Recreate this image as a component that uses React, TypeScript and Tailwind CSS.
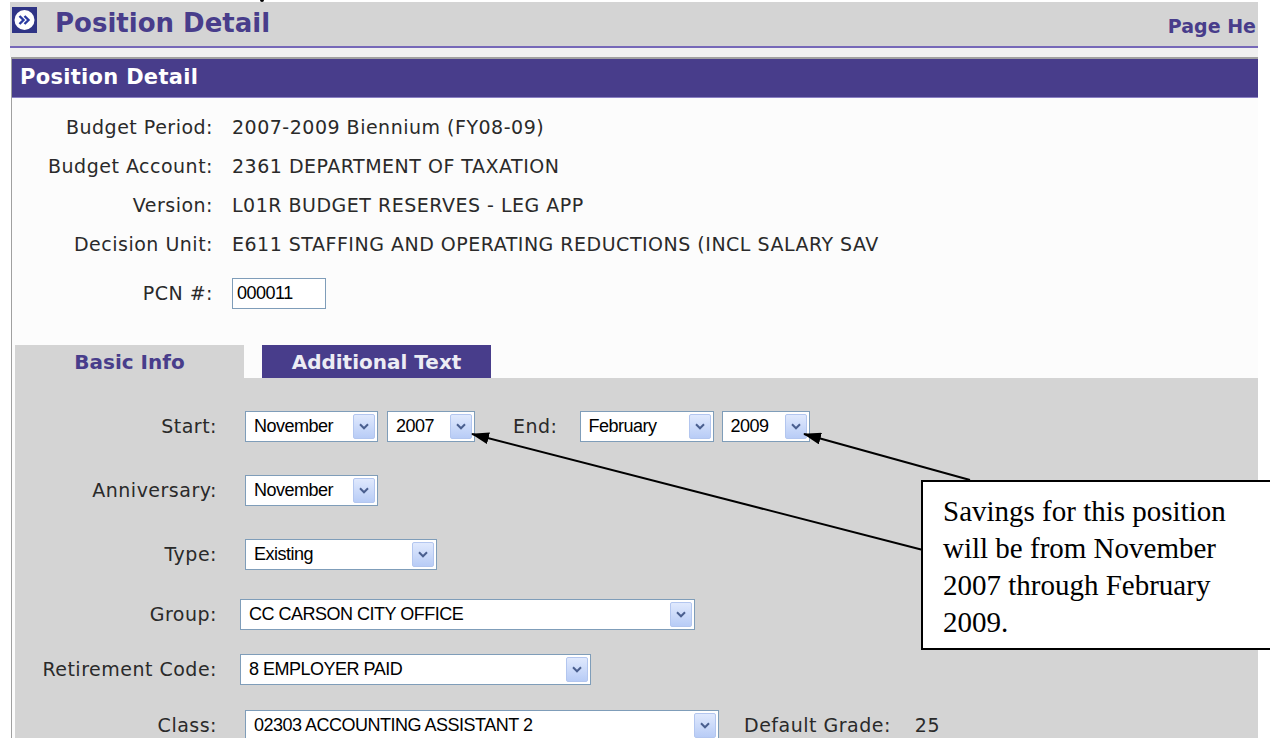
import React from "react";

function PageIcon() {
  return (
    <svg width="25" height="26" viewBox="0 0 25 26" className="shrink-0">
      <rect x="0" y="0" width="25" height="26" fill="#2f3485" />
      <circle cx="12.5" cy="13" r="10" fill="#ffffff" />
      <path d="M7.5 9 L11.5 13 L7.5 17" fill="none" stroke="#2a3aa0" strokeWidth="2.4" />
      <path d="M12.5 9 L16.5 13 L12.5 17" fill="none" stroke="#2a3aa0" strokeWidth="2.4" />
    </svg>
  );
}

function Chevron() {
  return (
    <svg width="10" height="7" viewBox="0 0 10 7">
      <path d="M1 1.3 L5 5.3 L9 1.3" fill="none" stroke="#4a5f8f" strokeWidth="2" />
    </svg>
  );
}

function Select({ value, className }: { value: string; className: string }) {
  return (
    <div
      className={`${className} h-[31px] shrink-0 flex items-center bg-white border border-[#7f9db9] pl-[8px] pr-[2px] font-['Liberation_Sans',Arial,sans-serif] text-[18px] tracking-[-0.5px] text-black`}
    >
      <span className="flex-1 whitespace-nowrap overflow-hidden">{value}</span>
      <span className="w-[22px] h-[25px] rounded-[2px] border border-[#b3c6ef] bg-linear-to-b from-[#e0e9fd] to-[#b8ccf6] flex items-center justify-center">
        <Chevron />
      </span>
    </div>
  );
}

function InfoRow({ label, value }: { label: string; value: string }) {
  return (
    <div className="h-[39px] flex items-center">
      <div className="w-[201px] text-right whitespace-nowrap">{label}</div>
      <div className="ml-[19px] whitespace-nowrap">{value}</div>
    </div>
  );
}

function FormLabel({ children }: { children: React.ReactNode }) {
  return <div className="w-[202px] shrink-0 text-right whitespace-nowrap">{children}</div>;
}

export default function App() {
  return (
    <div className="relative w-[1270px] h-[738px] overflow-hidden bg-white text-[#2a2a2a] font-['DejaVu_Sans',Verdana,sans-serif] text-[19px]">
      {/* descender of a line of text above the page */}
      <div className="absolute left-[260px] top-0 w-[4px] h-[2px] bg-black rounded-b-full" />

      <div className="pt-[2px] pl-[10px] pr-[12px]">
        {/* page title band */}
        <header className="h-[44px] bg-[#d4d4d4] flex items-start overflow-hidden">
          <div className="ml-[2px] mt-[5px]">
            <PageIcon />
          </div>
          <h1 className="ml-[18px] mt-[4px] text-[26px] leading-[34px] font-bold text-[#483d8b] whitespace-nowrap">
            Position Detail
          </h1>
          <div className="flex-1" />
          <div className="mr-[2px] mt-[11px] whitespace-nowrap text-[19px] leading-[26px] font-bold text-[#483d8b]">
            Page He
          </div>
        </header>
        <div className="h-[2px] bg-[#7668b8]" />
        <div className="h-[9px] bg-[#f0f0f0]" />

        <div className="ml-[1px] border-l border-t-2 border-[#a0a0a0]">
          <div className="h-[38px] bg-[#483d8b] flex items-center pl-[8px] text-white font-bold text-[21px] tracking-[0.3px] whitespace-nowrap">
            Position Detail
          </div>
          <div className="h-[1px] bg-[#8a80c4]" />

          <div className="bg-[#fcfcfc] h-[641px]">
            <div className="pt-[10px] tracking-[0.5px]">
              <InfoRow label="Budget Period:" value="2007-2009 Biennium (FY08-09)" />
              <InfoRow label="Budget Account:" value="2361 DEPARTMENT OF TAXATION" />
              <InfoRow label="Version:" value="L01R BUDGET RESERVES - LEG APP" />
              <InfoRow label="Decision Unit:" value="E611 STAFFING AND OPERATING REDUCTIONS (INCL SALARY SAV" />
              <div className="mt-[14px] flex items-center">
                <div className="w-[201px] text-right">PCN #:</div>
                <div className="ml-[19px] w-[94px] h-[31px] bg-white border border-[#7f9db9] pl-[4px] flex items-center font-['Liberation_Sans',Arial,sans-serif] text-[18px] tracking-[-0.5px] text-black">
                  000011
                </div>
              </div>
            </div>

            {/* tabs */}
            <div className="mt-[36px] ml-[3px] flex h-[33px] font-bold text-[20px]">
              <div className="w-[229px] bg-[#d4d4d4] text-[#483d8b] flex items-center justify-center">Basic Info</div>
              <div className="ml-[18px] w-[229px] bg-[#483d8b] text-[#ececf4] flex items-center justify-center">
                Additional Text
              </div>
            </div>

            {/* tab panel */}
            <div className="ml-[3px] bg-[#d4d4d4] h-[360px] pt-[33px] tracking-[0.5px]">
              <div className="flex items-center h-[31px]">
                <FormLabel>Start:</FormLabel>
                <Select value="November" className="ml-[28px] w-[133px]" />
                <Select value="2007" className="ml-[9px] w-[88px]" />
                <div className="ml-[38px] whitespace-nowrap">End:</div>
                <Select value="February" className="ml-[22px] w-[134px]" />
                <Select value="2009" className="ml-[8px] w-[88px]" />
              </div>
              <div className="mt-[33px] flex items-center h-[31px]">
                <FormLabel>Anniversary:</FormLabel>
                <Select value="November" className="ml-[28px] w-[133px]" />
              </div>
              <div className="mt-[33px] flex items-center h-[31px]">
                <FormLabel>Type:</FormLabel>
                <Select value="Existing" className="ml-[28px] w-[192px]" />
              </div>
              <div className="mt-[29px] flex items-center h-[31px]">
                <FormLabel>Group:</FormLabel>
                <Select value="CC CARSON CITY OFFICE" className="ml-[23px] w-[455px]" />
              </div>
              <div className="mt-[24px] flex items-center h-[31px]">
                <FormLabel>Retirement Code:</FormLabel>
                <Select value="8 EMPLOYER PAID" className="ml-[23px] w-[351px]" />
              </div>
              <div className="mt-[25px] flex items-center h-[31px]">
                <FormLabel>Class:</FormLabel>
                <Select value="02303 ACCOUNTING ASSISTANT 2" className="ml-[28px] w-[474px]" />
                <div className="ml-[25px] whitespace-nowrap">Default Grade:</div>
                <div className="ml-[24px]">25</div>
              </div>
            </div>
          </div>
        </div>
      </div>

      {/* callout arrows */}
      <svg className="absolute inset-0 pointer-events-none" width="1270" height="738" viewBox="0 0 1270 738">
        <defs>
          <marker id="head" markerWidth="18" markerHeight="12" refX="17" refY="6" orient="auto" markerUnits="userSpaceOnUse">
            <path d="M0 0 L18 6 L0 12 Z" fill="#000" />
          </marker>
        </defs>
        <line x1="923" y1="550" x2="472" y2="434" stroke="#000" strokeWidth="2" markerEnd="url(#head)" />
        <line x1="970" y1="480" x2="804" y2="434" stroke="#000" strokeWidth="2" markerEnd="url(#head)" />
      </svg>

      {/* callout note */}
      <div className="absolute left-[921px] top-[480px] w-[370px] h-[170px] bg-white border-2 border-black pl-[20px] pt-[11px] font-['Liberation_Serif','Times_New_Roman',serif] text-[29px] leading-[37px] text-black">
        Savings for this position
        <br />
        will be from November
        <br />
        2007 through February
        <br />
        2009.
      </div>
    </div>
  );
}
